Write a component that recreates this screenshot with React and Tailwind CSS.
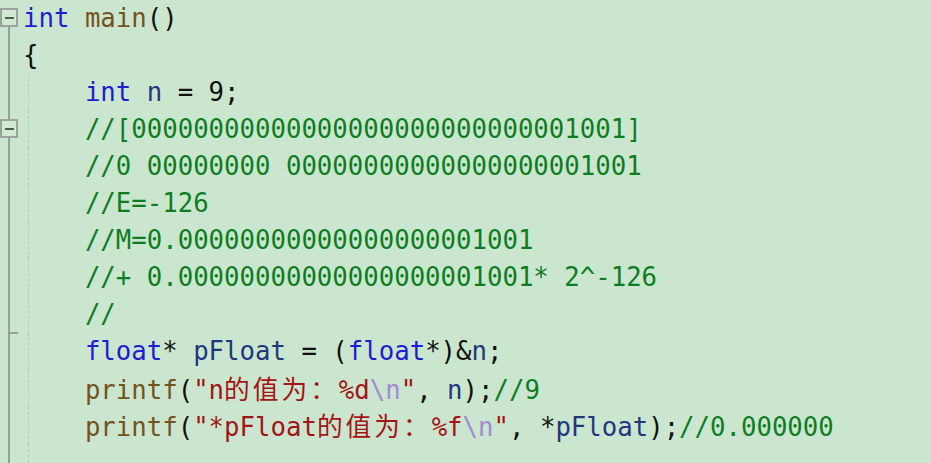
const KW = 'text-[#1d1dd2]'
const FN = 'text-[#74531f]'
const CM = 'text-[#0d7d22]'
const VAR = 'text-[#1f377f]'
const STR = 'text-[#a31515]'
const ESC = 'text-[#a589d4]'
const PL = 'text-[#111111]'

const T = ({ c, children }) => <span className={c}>{children}</span>

const Cjk = ({ children }) => (
  <span className={`${STR} tracking-[3px] font-['Noto_Sans_CJK_SC',sans-serif]`}>{children}</span>
)

const lines = [
  <><T c={KW}>int</T> <T c={FN}>main</T><T c={PL}>()</T></>,
  <T c={PL}>{'{'}</T>,
  <>{'    '}<T c={KW}>int</T> <T c={VAR}>n</T><T c={PL}> = 9;</T></>,
  <>{'    '}<T c={CM}>//[00000000000000000000000000001001]</T></>,
  <>{'    '}<T c={CM}>//0 00000000 00000000000000000001001</T></>,
  <>{'    '}<T c={CM}>//E=-126</T></>,
  <>{'    '}<T c={CM}>//M=0.00000000000000000001001</T></>,
  <>{'    '}<T c={CM}>//+ 0.00000000000000000001001* 2^-126</T></>,
  <>{'    '}<T c={CM}>//</T></>,
  <>{'    '}<T c={KW}>float</T><T c={PL}>* </T><T c={VAR}>pFloat</T><T c={PL}> = (</T><T c={KW}>float</T><T c={PL}>*)&amp;</T><T c={VAR}>n</T><T c={PL}>;</T></>,
  <>{'    '}<T c={FN}>printf</T><T c={PL}>(</T><T c={STR}>"n</T><Cjk>的值为：</Cjk><T c={STR}>%d</T><T c={ESC}>\n</T><T c={STR}>"</T><T c={PL}>, </T><T c={VAR}>n</T><T c={PL}>);</T><T c={CM}>//9</T></>,
  <>{'    '}<T c={FN}>printf</T><T c={PL}>(</T><T c={STR}>"*pFloat</T><Cjk>的值为：</Cjk><T c={STR}>%f</T><T c={ESC}>\n</T><T c={STR}>"</T><T c={PL}>, *</T><T c={VAR}>pFloat</T><T c={PL}>);</T><T c={CM}>//0.000000</T></>,
]

function FoldBox() {
  return (
    <div className="absolute left-0 top-[8px] w-[18px] h-[19px] border-2 border-[#9ba39c] bg-[#d0e9d3] flex items-center justify-center">
      <div className="w-[9px] h-[2px] bg-[#4f5a52]" />
    </div>
  )
}

function Gutter({ i }) {
  return (
    <div className="relative w-[23px] h-full shrink-0">
      {i === 0 && (
        <>
          <FoldBox />
          <div className="absolute left-[8px] top-[27px] bottom-0 w-[2px] bg-[#979f98]" />
        </>
      )}
      {i > 0 && <div className="absolute left-[8px] top-0 bottom-0 w-[2px] bg-[#979f98]" />}
      {i === 3 && <FoldBox />}
      {i === 8 && <div className="absolute left-[9px] top-[36px] w-[9px] h-[2px] bg-[#979f98]" />}
      {i >= 2 && <div className="absolute left-[28px] top-0 bottom-0 border-l border-dashed border-[#b5ceb8]" />}
    </div>
  )
}

export default function App() {
  return (
    <div className="w-[931px] h-[463px] overflow-hidden bg-[#cbe6cf] font-['DejaVu_Sans_Mono','Noto_Sans_CJK_SC',monospace] text-[25.7px]">
      {lines.map((line, i) => (
        <div key={i} className="flex items-center h-[37px]">
          <Gutter i={i} />
          <div className="whitespace-pre leading-[37px]">{line}</div>
        </div>
      ))}
      <div className="flex h-[19px]">
        <div className="relative w-[23px] h-full">
          <div className="absolute left-[8px] top-0 bottom-0 w-[2px] bg-[#979f98]" />
          <div className="absolute left-[28px] top-0 bottom-0 border-l border-dashed border-[#b5ceb8]" />
        </div>
      </div>
    </div>
  )
}
